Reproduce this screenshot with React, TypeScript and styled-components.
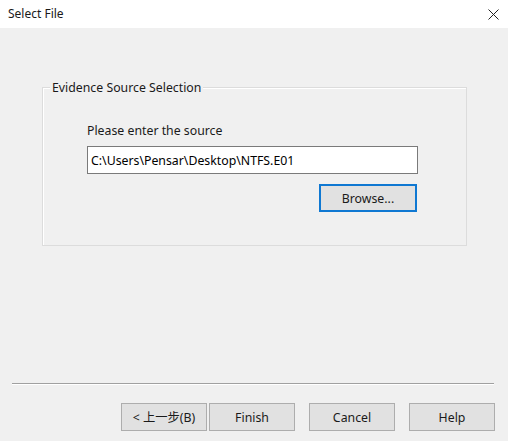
import React from "react";
import styled, { createGlobalStyle } from "styled-components";

const Global = createGlobalStyle`
  html, body { margin: 0; padding: 0; background: #f0f0f0; }
  body { font-family: "Noto Sans", "Noto Sans CJK SC", sans-serif; font-size: 12px; color: #000; }
  * { box-sizing: border-box; }
`;

const Window = styled.div`
  width: 508px;
  height: 441px;
  display: flex;
  flex-direction: column;
  background: #f0f0f0;
  overflow: hidden;
`;

const TitleBar = styled.div`
  height: 28px;
  flex: 0 0 28px;
  background: #ffffff;
  display: flex;
  align-items: center;
  justify-content: space-between;
  padding: 0 9px 0 8px;
`;

const Title = styled.span`
  font-size: 12px;
  color: #1a1a1a;
  line-height: 16px;
`;

const CloseIcon = () => (
  <svg width="11" height="11" viewBox="0 0 11 11">
    <path d="M0.5 0.5 L10.5 10.5 M10.5 0.5 L0.5 10.5" stroke="#222" strokeWidth="1" fill="none" />
  </svg>
);

const Body = styled.div`
  flex: 1;
  display: flex;
  flex-direction: column;
`;

const Group = styled.div`
  position: relative;
  margin: 59px 0 0 42px;
  width: 425px;
  height: 159px;
  border: 1px solid #dcdcdc;
  box-shadow: inset 1px 1px 0 #ffffff;
  padding: 34px 0 0 44px;
  display: flex;
  flex-direction: column;
  align-items: flex-start;
`;

const Legend = styled.span`
  position: absolute;
  top: -9px;
  left: 7px;
  padding: 0 2px;
  background: #f0f0f0;
  line-height: 17px;
  font-size: 12.3px;
  color: #1a1a1a;
`;

const Label = styled.div`
  line-height: 17px;
  font-size: 12.3px;
  color: #1a1a1a;
`;

const PathInput = styled.div`
  margin-top: 7px;
  width: 331px;
  height: 28px;
  border: 1px solid #7a7a7a;
  background: #ffffff;
  display: flex;
  align-items: center;
  padding-left: 3px;
  font-size: 12.3px;
  color: #000;
`;

const BrowseRow = styled.div`
  margin-top: 10px;
  width: 331px;
  display: flex;
  justify-content: flex-end;
`;

const Button = styled.button<{ $focused?: boolean }>`
  width: ${(p) => (p.$focused ? "98px" : "86px")};
  height: 28px;
  margin-right: ${(p) => (p.$focused ? "1px" : "0")};
  background: #e1e1e1;
  border: ${(p) => (p.$focused ? "2px solid #0f78d2" : "1px solid #adadad")};
  font-family: inherit;
  font-size: 12.3px;
  color: #1a1a1a;
  padding: 0;
  display: flex;
  align-items: center;
  justify-content: center;
`;

const Separator = styled.div`
  margin: 137px 0 0 12px;
  width: 482px;
  height: 1px;
  background: #a0a0a0;
  box-shadow: 0 1px 0 #ffffff;
`;

const Footer = styled.div`
  margin-top: 19px;
  padding-right: 13px;
  display: flex;
  justify-content: flex-end;
`;

const Pair = styled.div`
  display: flex;
  gap: 2px;
  margin-right: 14px;
`;

const Spaced = styled.div`
  display: flex;
  gap: 14px;
`;

export default function App() {
  return (
    <>
      <Global />
      <Window>
        <TitleBar>
          <Title>Select File</Title>
          <CloseIcon />
        </TitleBar>
        <Body>
          <Group>
            <Legend>Evidence Source Selection</Legend>
            <Label>Please enter the source</Label>
            <PathInput>C:\Users\Pensar\Desktop\NTFS.E01</PathInput>
            <BrowseRow>
              <Button $focused>Browse...</Button>
            </BrowseRow>
          </Group>
          <Separator />
          <Footer>
            <Pair>
              <Button>&lt; 上一步(B)</Button>
              <Button>Finish</Button>
            </Pair>
            <Spaced>
              <Button>Cancel</Button>
              <Button>Help</Button>
            </Spaced>
          </Footer>
        </Body>
      </Window>
    </>
  );
}
